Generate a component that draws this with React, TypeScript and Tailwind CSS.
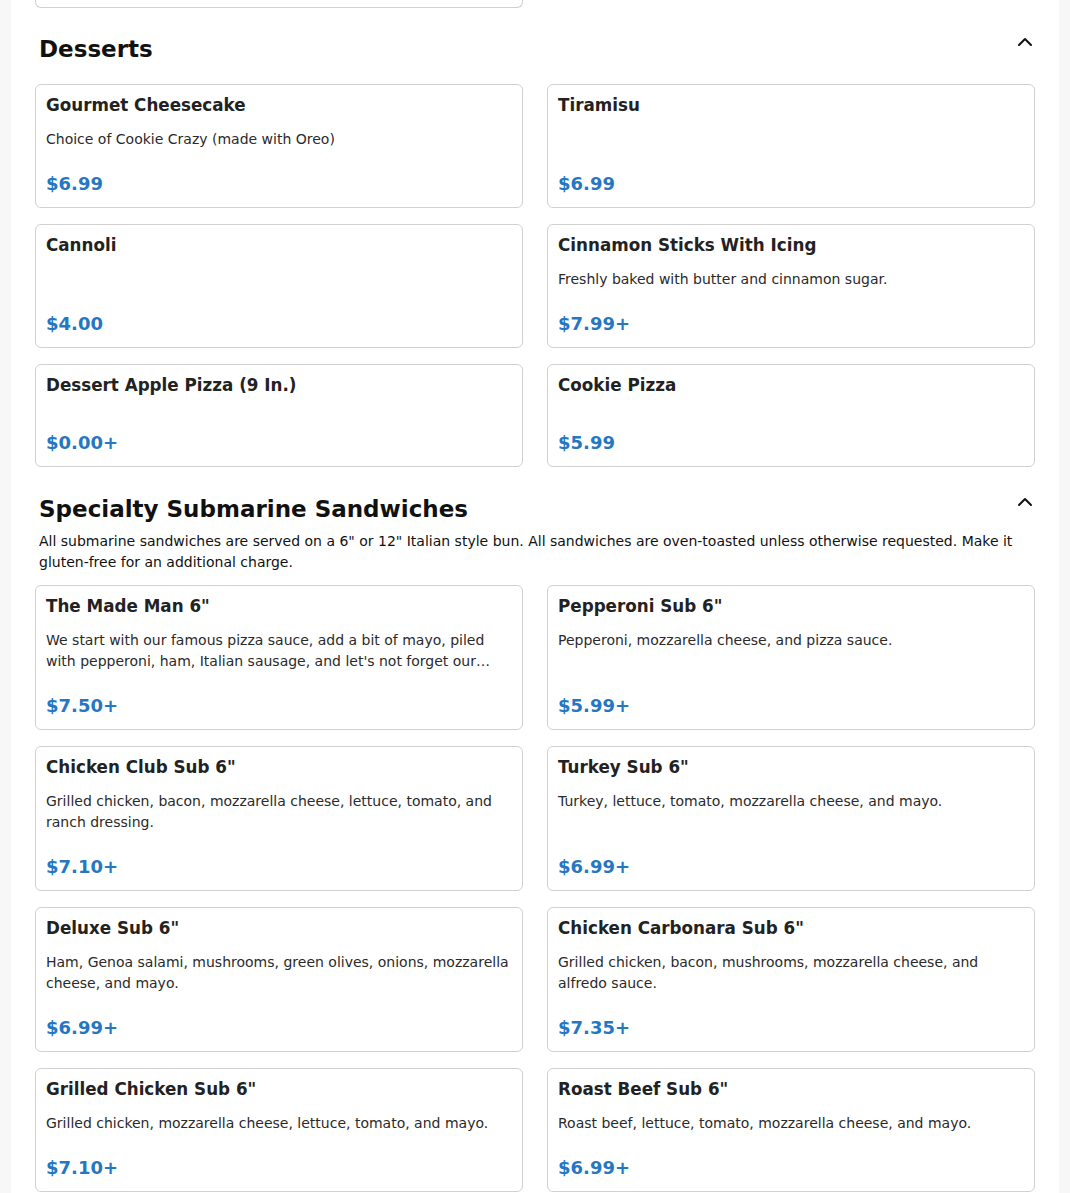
import { ChevronUp } from "lucide-react";

type Item = {
  name: string;
  desc?: string;
  price: string;
};

type Section = {
  title: string;
  desc?: string;
  items: Item[];
};

const sections: Section[] = [
  {
    title: "Desserts",
    items: [
      { name: "Gourmet Cheesecake", desc: "Choice of Cookie Crazy (made with Oreo)", price: "$6.99" },
      { name: "Tiramisu", price: "$6.99" },
      { name: "Cannoli", price: "$4.00" },
      { name: "Cinnamon Sticks With Icing", desc: "Freshly baked with butter and cinnamon sugar.", price: "$7.99+" },
      { name: "Dessert Apple Pizza (9 In.)", price: "$0.00+" },
      { name: "Cookie Pizza", price: "$5.99" },
    ],
  },
  {
    title: "Specialty Submarine Sandwiches",
    desc: 'All submarine sandwiches are served on a 6" or 12" Italian style bun. All sandwiches are oven-toasted unless otherwise requested. Make it gluten-free for an additional charge.',
    items: [
      {
        name: 'The Made Man 6"',
        desc: "We start with our famous pizza sauce, add a bit of mayo, piled with pepperoni, ham, Italian sausage, and let's not forget our…",
        price: "$7.50+",
      },
      { name: 'Pepperoni Sub 6"', desc: "Pepperoni, mozzarella cheese, and pizza sauce.", price: "$5.99+" },
      {
        name: 'Chicken Club Sub 6"',
        desc: "Grilled chicken, bacon, mozzarella cheese, lettuce, tomato, and ranch dressing.",
        price: "$7.10+",
      },
      { name: 'Turkey Sub 6"', desc: "Turkey, lettuce, tomato, mozzarella cheese, and mayo.", price: "$6.99+" },
      {
        name: 'Deluxe Sub 6"',
        desc: "Ham, Genoa salami, mushrooms, green olives, onions, mozzarella cheese, and mayo.",
        price: "$6.99+",
      },
      {
        name: 'Chicken Carbonara Sub 6"',
        desc: "Grilled chicken, bacon, mushrooms, mozzarella cheese, and alfredo sauce.",
        price: "$7.35+",
      },
      { name: 'Grilled Chicken Sub 6"', desc: "Grilled chicken, mozzarella cheese, lettuce, tomato, and mayo.", price: "$7.10+" },
      { name: 'Roast Beef Sub 6"', desc: "Roast beef, lettuce, tomato, mozzarella cheese, and mayo.", price: "$6.99+" },
    ],
  },
];

function ItemCard({ item }: { item: Item }) {
  return (
    <div className="flex flex-col rounded-md border border-[#d0d0d0] bg-white p-[10px]">
      <h3 className="text-[16.75px] font-bold leading-[20px] text-[#222]">{item.name}</h3>
      <p className="mt-[14px] text-[14px] leading-[21px] text-[#2a2a2a]">{item.desc}</p>
      <div className="mt-auto pt-5 text-[18px] font-bold leading-[27px] text-[#2677c2]">{item.price}</div>
    </div>
  );
}

function MenuSection({ section }: { section: Section }) {
  return (
    <section className="pt-[28px]">
      <div className="flex items-start justify-between px-1">
        <h2 className="text-[23px] font-bold leading-[28px] text-[#111]">{section.title}</h2>
        <button type="button" className="-mr-[6px] -mt-[5px] text-[#111]">
          <ChevronUp size={24} strokeWidth={2} />
        </button>
      </div>
      {section.desc ? (
        <p className="mb-[12px] mt-2 px-1 text-[14px] leading-[21px] text-[#111]">{section.desc}</p>
      ) : (
        <div className="h-[21px]"></div>
      )}
      <div className="grid grid-cols-2 gap-x-6 gap-y-4">
        {section.items.map((item) => (
          <ItemCard key={item.name} item={item} />
        ))}
      </div>
    </section>
  );
}

function App() {
  return (
    <div className="min-h-screen bg-[#f7f7f7] font-['DejaVu_Sans',sans-serif]">
      <div className="mx-[11px] bg-white px-6 pb-6">
        <div className="-mb-px grid grid-cols-2 gap-x-6">
          <div className="h-[8px] rounded-b-md border-x border-b border-[#d0d0d0]"></div>
        </div>
        {sections.map((section) => (
          <MenuSection key={section.title} section={section} />
        ))}
      </div>
    </div>
  );
}

export default App;
